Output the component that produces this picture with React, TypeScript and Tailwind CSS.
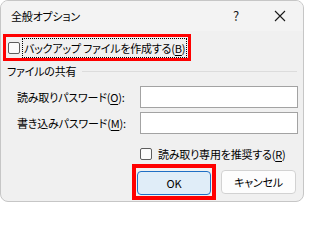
import React from 'react';

const font = "font-['Noto_Sans_CJK_JP','Yu_Gothic_UI',sans-serif] [font-feature-settings:'palt'] tracking-[-0.2px]";

const CheckBox: React.FC = () => (
    <span className="inline-block w-[12px] h-[12px] shrink-0 rounded-[2px] border border-[#5d5d5d] bg-[#fbfbfb]"></span>
);

const PasswordRow: React.FC<{ label: string; accel: string; top: string }> = ({ label, accel, top }) => (
    <div className={`flex items-center ${top}`}>
        <span className="w-[139px] shrink-0 pl-[16px] text-[11px] leading-[22px] text-black whitespace-nowrap">
            {label}(<span className="underline underline-offset-2">{accel}</span>):
        </span>
        <div className="w-[158px] h-[22px] bg-white border border-[#a3a3a3]"></div>
    </div>
);

export default function App() {
    return (
        <div className={`w-[304px] h-[203px] bg-white ${font}`}>
            <div className="w-[304px] h-[202px] rounded-[8px] border border-[#c6c6c6] bg-[#f0f0f0] overflow-hidden flex flex-col">
                {/* title bar */}
                <div className="h-[30px] shrink-0 bg-[#f3f3f3] flex items-center">
                    <span className="pl-[10px] text-[11px] text-black">全般オプション</span>
                    <span className="ml-auto mr-[35px] text-[13px] text-[#1a1a1a]">?</span>
                    <svg width="12" height="12" viewBox="0 0 12 12" className="mr-[17px]">
                        <path d="M1 1 L11 11 M11 1 L1 11" stroke="#1a1a1a" strokeWidth="1.1" />
                    </svg>
                </div>

                {/* backup option */}
                <div className="mt-[3px] ml-[2px] self-start h-[27px] border-[3px] border-[#ff0000] flex items-center pl-[2px] pr-[1px]">
                    <CheckBox />
                    <span className="ml-[2px] h-[20px] px-[1px] border border-dotted border-black text-[11px] leading-[18px] text-black whitespace-nowrap">
                        バックアップ ファイルを作成する(<span className="underline underline-offset-2">B</span>)
                    </span>
                </div>

                {/* group header */}
                <div className="mt-[1px] h-[18px] flex items-center pl-[6px] pr-[6px]">
                    <span className="text-[11px] text-black whitespace-nowrap">ファイルの共有</span>
                    <div className="flex-1 ml-[6px] h-px bg-[#dcdcdc]"></div>
                </div>

                <PasswordRow label="読み取りパスワード" accel="O" top="mt-[6px]" />
                <PasswordRow label="書き込みパスワード" accel="M" top="mt-[4px]" />

                {/* read-only recommended */}
                <div className="mt-[13px] flex items-center pl-[139px]">
                    <CheckBox />
                    <span className="ml-[6px] text-[11px] leading-[14px] text-black whitespace-nowrap">
                        読み取り専用を推奨する(<span className="underline underline-offset-2">R</span>)
                    </span>
                </div>

                {/* buttons */}
                <div className="mt-[3px] flex items-center pl-[131px]">
                    <div className="border-[4px] border-[#ff0000] p-px">
                        <button className="w-[74px] h-[24px] rounded-[4px] border border-[#1f6fc5] bg-[#e0edf8] text-[11px] text-black">
                            OK
                        </button>
                    </div>
                    <button className="ml-[5px] w-[75px] h-[24px] rounded-[4px] border border-[#d2d2d2] bg-[#fdfdfd] text-[11px] text-black">
                        キャンセル
                    </button>
                </div>
            </div>
        </div>
    );
}
